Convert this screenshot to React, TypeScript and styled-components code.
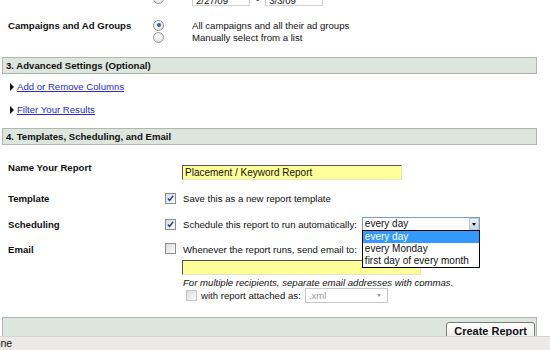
import styled, { createGlobalStyle } from "styled-components";

const GlobalStyle = createGlobalStyle`
    html, body {
        margin: 0;
        padding: 0;
        background: #ffffff;
    }
`;

const Page = styled.div`
    width: 550px;
    height: 350px;
    overflow: hidden;
    display: flex;
    flex-direction: column;
    background: #ffffff;
    font-family: "Liberation Sans", Arial, sans-serif;
    font-size: 9.6px;
    color: #111;
`;

const Content = styled.div`
    flex: 1;
    overflow: hidden;
    padding: 0 13px 0 2px;
`;

// page is scrolled a little, first row is cut off
const Scroller = styled.div`
    margin-top: -10px;
`;

const RadioRow = styled.div`
    display: grid;
    grid-template-columns: 145px 1fr;
    padding-left: 6px;
    margin-top: ${p => p.$top || 0}px;
`;

const Label = styled.div`
    font-weight: bold;
    line-height: 13px;
`;

const OptionList = styled.div`
    display: flex;
    flex-direction: column;
`;

const Option = styled.div`
    display: grid;
    grid-template-columns: 39px 1fr;
    align-items: center;
    height: ${p => p.$h || 12}px;
`;

const Radio = styled.span`
    width: 9px;
    height: 9px;
    border-radius: 50%;
    border: 1px solid #9a9a9a;
    background: radial-gradient(circle at 40% 40%, #ffffff, #dcdcdc);
    display: flex;
    align-items: center;
    justify-content: center;
    &::after {
        content: "";
        width: 4px;
        height: 4px;
        border-radius: 50%;
        background: ${p => (p.$on ? "#2b63b8" : "transparent")};
    }
`;

const DateGroup = styled.div`
    display: flex;
    align-items: flex-end;
    gap: 6px;
    height: 16px;
    line-height: 12px;
`;

const DateInput = styled.div`
    width: 58px;
    height: 16px;
    border: 1px solid #d4d4d4;
    padding: 4px 0 0 3px;
    line-height: 12px;
    box-sizing: border-box;
`;

const SectionHeader = styled.div`
    height: 17px;
    box-sizing: border-box;
    border: 1px solid #b2b6b2;
    background: #dde6dd;
    font-weight: bold;
    line-height: 15px;
    padding-left: 3px;
    margin-top: ${p => p.$top || 0}px;
`;

const LinkRow = styled.div`
    display: flex;
    align-items: center;
    gap: 3px;
    padding-left: 8px;
    line-height: 13px;
    margin-top: ${p => p.$top || 0}px;
`;

const Triangle = styled.span`
    width: 0;
    height: 0;
    border-top: 4px solid transparent;
    border-bottom: 4px solid transparent;
    border-left: 4px solid #111;
`;

const TextLink = styled.a`
    color: #2a2ad0;
    text-decoration: underline;
`;

const FieldRow = styled.div`
    display: grid;
    grid-template-columns: 157px 17px 1fr;
    align-items: ${p => p.$align || "center"};
    padding-left: 6px;
    margin-top: ${p => p.$top || 0}px;
`;

const FieldBody = styled.div`
    grid-column: 3;
    display: flex;
    flex-direction: column;
    padding-left: 1px;
`;

const TextLine = styled.div`
    display: flex;
    align-items: center;
    gap: 5px;
    line-height: 13px;
    white-space: nowrap;
`;

const YellowInput = styled.div`
    width: ${p => p.$w}px;
    height: 15px;
    box-sizing: border-box;
    background: #ffff99;
    border-top: 1px solid #555;
    border-left: 1px solid #555;
    border-right: 1px solid #e8e8c0;
    border-bottom: 1px solid #e8e8c0;
    padding-left: 2px;
    line-height: 13px;
    margin-top: ${p => p.$top || 0}px;
    margin-left: -1px;
    font-size: 10px;
`;

const CheckBox = ({ on, faint }: { on?: boolean; faint?: boolean }) => (
    <Box $faint={faint}>
        {on && (
            <svg width="7" height="7" viewBox="0 0 7 7">
                <path d="M0.8 3.4 L2.6 5.4 L6.2 0.8" fill="none" stroke="#24459a" strokeWidth="1.5" />
            </svg>
        )}
    </Box>
);

const Box = styled.span`
    width: 9px;
    height: 9px;
    border: 1px solid ${p => (p.$faint ? "#c4c4c4" : "#8c8c8c")};
    background: linear-gradient(135deg, #dcdcdc, #fbfbfb);
    display: flex;
    align-items: center;
    justify-content: center;
`;

const SelectWrap = styled.div`
    position: relative;
    width: 118px;
    height: 14px;
    box-sizing: border-box;
    border: 1px solid #7f9db9;
    background: #fff;
    display: flex;
    align-items: center;
    font-size: 10px;
`;

const SelectText = styled.span`
    flex: 1;
    padding-left: 2px;
    line-height: 12px;
`;

const ArrowButton = styled.span`
    width: 10px;
    height: 12px;
    box-sizing: border-box;
    border: 1px solid #b9c8dc;
    background: linear-gradient(#eef2f8, #c9d6e8);
    display: flex;
    align-items: center;
    justify-content: center;
    &::after {
        content: "";
        border-left: 2.5px solid transparent;
        border-right: 2.5px solid transparent;
        border-top: 3px solid #111;
    }
`;

const DropList = styled.div`
    position: absolute;
    top: 12px;
    left: -1px;
    width: 118px;
    box-sizing: border-box;
    border: 1px solid #000;
    background: #fff;
    z-index: 2;
`;

const DropItem = styled.div`
    line-height: 12px;
    padding-left: 2px;
    background: ${p => (p.$on ? "#3399ff" : "#fff")};
    color: ${p => (p.$on ? "#fff" : "#111")};
`;

const Hint = styled.div`
    font-style: italic;
    line-height: 13px;
    margin-top: 1px;
    white-space: nowrap;
`;

const AttachLine = styled.div`
    display: flex;
    align-items: center;
    gap: 4px;
    padding-left: 3px;
    margin-top: -1px;
    height: 15px;
`;

const XmlSelect = styled.div`
    width: 83px;
    height: 15px;
    box-sizing: border-box;
    border: 1px solid #c8c8c8;
    color: #a0a0a0;
    display: flex;
    align-items: center;
    justify-content: space-between;
    padding: 0 6px 0 3px;
    &::after {
        content: "";
        border-left: 2.5px solid transparent;
        border-right: 2.5px solid transparent;
        border-top: 3px solid #999;
    }
`;

const FooterBar = styled.div`
    margin-top: 14px;
    height: 30px;
    border: 1px solid #b2b6b2;
    background: #dde6dd;
    display: flex;
    justify-content: flex-end;
    align-items: flex-start;
    padding: 4px 1px 0 0;
`;

const CreateButton = styled.button`
    font-family: "Liberation Sans", Arial, sans-serif;
    font-size: 11px;
    font-weight: bold;
    color: #111;
    padding: 0 7px;
    height: 18px;
    border: 1px solid #7a7a7a;
    border-radius: 3px;
    background: linear-gradient(#ffffff, #ececec);
`;

const StatusBar = styled.div`
    height: 13px;
    background: #ece9e7;
    border-top: 1px solid #d8d4d0;
    font-size: 10.5px;
    line-height: 13px;
    text-indent: -13px;
    overflow: hidden;
`;

function App() {
    return (
        <Page>
            <GlobalStyle />
            <Content>
                <Scroller>
                    <RadioRow>
                        <Label></Label>
                        <OptionList>
                            <Option $h={16}>
                                <Radio $on />
                                <DateGroup>
                                    <DateInput>2/27/09</DateInput>
                                    -
                                    <DateInput>3/3/09</DateInput>
                                </DateGroup>
                            </Option>
                        </OptionList>
                    </RadioRow>
                    <RadioRow $top={13}>
                        <Label>Campaigns and Ad Groups</Label>
                        <OptionList>
                            <Option>
                                <Radio $on />
                                <span>All campaigns and all their ad groups</span>
                            </Option>
                            <Option>
                                <Radio />
                                <span>Manually select from a list</span>
                            </Option>
                        </OptionList>
                    </RadioRow>

                    <SectionHeader $top={14}>3. Advanced Settings (Optional)</SectionHeader>
                    <LinkRow $top={6}>
                        <Triangle />
                        <TextLink href="#">Add or Remove Columns</TextLink>
                    </LinkRow>
                    <LinkRow $top={10}>
                        <Triangle />
                        <TextLink href="#">Filter Your Results</TextLink>
                    </LinkRow>

                    <SectionHeader $top={12}>4. Templates, Scheduling, and Email</SectionHeader>
                    <FieldRow $top={16} $align="start">
                        <Label>Name Your Report</Label>
                        <FieldBody>
                            <YellowInput $w={220} $top={4}>Placement / Keyword Report</YellowInput>
                        </FieldBody>
                    </FieldRow>
                    <FieldRow $top={12}>
                        <Label>Template</Label>
                        <CheckBox on />
                        <FieldBody>
                            <TextLine>Save this as a new report template</TextLine>
                        </FieldBody>
                    </FieldRow>
                    <FieldRow $top={12}>
                        <Label>Scheduling</Label>
                        <CheckBox on />
                        <FieldBody>
                            <TextLine>
                                Schedule this report to run automatically:
                                <SelectWrap>
                                    <SelectText>every day</SelectText>
                                    <ArrowButton />
                                    <DropList>
                                        <DropItem $on>every day</DropItem>
                                        <DropItem>every Monday</DropItem>
                                        <DropItem>first day of every month</DropItem>
                                    </DropList>
                                </SelectWrap>
                            </TextLine>
                        </FieldBody>
                    </FieldRow>
                    <FieldRow $top={12} $align="start">
                        <Label>Email</Label>
                        <CheckBox />
                        <FieldBody>
                            <TextLine>Whenever the report runs, send email to:</TextLine>
                            <YellowInput $w={239} $top={4} />
                            <Hint>For multiple recipients, separate email addresses with commas.</Hint>
                            <AttachLine>
                                <CheckBox faint />
                                <span>with report attached as:</span>
                                <XmlSelect>.xml</XmlSelect>
                            </AttachLine>
                        </FieldBody>
                    </FieldRow>

                    <FooterBar>
                        <CreateButton>Create Report</CreateButton>
                    </FooterBar>
                </Scroller>
            </Content>
            <StatusBar>Done</StatusBar>
        </Page>
    );
}

export default App;
